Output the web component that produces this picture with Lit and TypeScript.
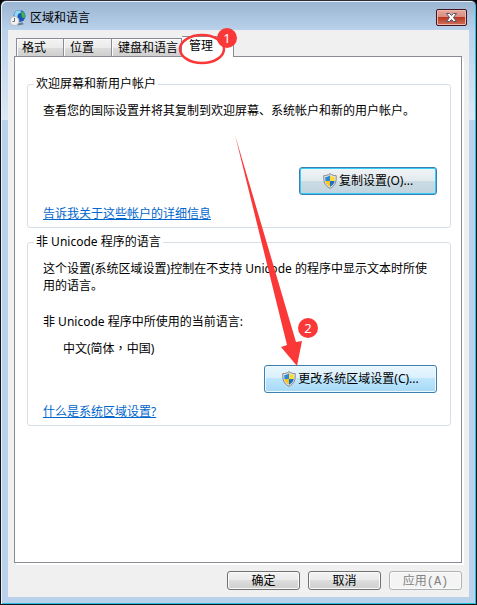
import { LitElement, html, css } from "lit";
import { customElement } from "lit/decorators.js";

const shield = html`<svg class="shield" width="14" height="16" viewBox="0 0 14 16" aria-hidden="true">
  <path d="M7 .6 C5.500 2 3 2.600 .8 2.600 C.4 8.500 1.600 12.600 7 15.400 C12.400 12.600 13.600 8.500 13.200 2.600 C11 2.600 8.500 2 7 .6 Z" fill="#dfe1e2" stroke="#85898d" stroke-width="1"/>
  <path d="M7 2.300 C5.800 3.400 4 4 2.300 4.100 L2.300 8 L7 8 Z" fill="#2a8ad8"/>
  <path d="M7 2.300 C8.200 3.400 10 4 11.700 4.100 L11.700 8 L7 8 Z" fill="#ffdc35"/>
  <path d="M2.300 8 L7 8 L7 13.800 C4.200 12.300 2.700 10.500 2.300 8 Z" fill="#f9c51c"/>
  <path d="M11.700 8 L7 8 L7 13.800 C9.800 12.300 11.300 10.500 11.700 8 Z" fill="#1b6fc2"/>
</svg>`;

@customElement("app-root")
export class AppRoot extends LitElement {
  static styles = css`
    :host {
      display: block;
      font: 12px/16px "Noto Sans", "Noto Sans CJK SC", sans-serif;
      color: #000;
      background: #000;
    }
    * { box-sizing: border-box; }
    .window {
      min-height: 100vh;
      display: flex;
      flex-direction: column;
      border: 1px solid #15171c;
      border-top: 1px solid #2b2a33;
      border-radius: 6px 6px 0 0;
      padding: 0 7px 7px;
      background:
        linear-gradient(#99b4d1, #b9d1ea 29px, #dce8f5 119px, #b9d1ea 119px);
      box-shadow: inset 1px 1px 0 #e8f1fa, inset -1px -1px 0 #27bfe2;
    }
    .title {
      display: flex;
      align-items: center;
      height: 29px;
      padding: 4px 2px 0 1px;
      gap: 3px;
    }
    h1 { flex: 1; margin: 0; font: inherit; }
    .close {
      width: 31px;
      height: 17px;
      display: grid;
      place-items: center;
      padding: 0;
      border: 1px solid #431422;
      border-radius: 2px;
      background: linear-gradient(#e5a99d, #d98b7d 50%, #b93822 50%, #d0705a);
      box-shadow: inset 0 0 0 1px #ecb9ae;
    }
    .client {
      flex: 1;
      display: flex;
      flex-direction: column;
      background: #f0f0f0;
      padding: 6px 7px 7px 6px;
    }
    .tabs {
      display: flex;
      align-items: flex-end;
      height: 20px;
      padding-left: 2px;
    }
    .tab {
      height: 18px;
      padding: 0 6px;
      border: 1px solid #898c95;
      border-bottom: 0;
      border-left-width: 0;
      background: linear-gradient(#f3f3f3, #ebebeb 50%, #dddddd 50%, #cfcfcf);
      box-shadow: inset 1px 1px 0 #fcfcfc;
      font: inherit;
      color: inherit;
      text-align: left;
      white-space: nowrap;
    }
    .tab:first-child { border-left-width: 1px; padding-left: 5px; }
    .short { width: 48px; }
    .long { width: 70px; }
    .tab.selected {
      position: relative;
      z-index: 1;
      width: 52px;
      height: 21px;
      margin-bottom: -1px;
      padding: 0 7px 3px;
      background: #fff;
      box-shadow: none;
    }
    .ring { position: absolute; left: -4px; top: -4px; }
    .badge {
      position: absolute;
      width: 20px;
      height: 20px;
      border-radius: 50%;
      background: #fb3838;
      color: #fff;
      font-size: 13px;
      line-height: 20px;
      text-align: center;
    }
    .one { left: 35px; top: -9px; }
    .pane {
      flex: 1;
      border: 1px solid #898c95;
      background: #fff;
      box-shadow: 2px 2px 0 #fff;
      padding: 19px 10px 18px 12px;
    }
    fieldset {
      margin: 0 0 6px;
      min-width: 0;
      border: 1px solid #d5dfe5;
      border-radius: 3px;
      padding: 10px 13px 5px 15px;
    }
    legend { margin-left: -9px; padding: 0 2px; }
    p { margin: 0; line-height: 17px; }
    .action {
      display: flex;
      justify-content: flex-end;
    }
    .copy { margin-top: 48px; }
    .change { margin-top: 8px; }
    .links { margin-top: 10px; }
    .about { padding-right: 8px; }
    .current { margin-top: 19px; }
    .locale { margin-top: 9px; padding-left: 20px; }
    .comma { font-family: "Noto Sans CJK TC", sans-serif; }
    a { color: #0066cc; text-decoration: underline; }
    .command {
      height: 28px;
      display: flex;
      align-items: center;
      justify-content: center;
      gap: 2px;
      padding: 0;
      border: 1px solid #3c7fb1;
      border-radius: 3px;
      font: inherit;
      color: inherit;
    }
    .copybtn {
      width: 138px;
      background: linear-gradient(#f0f4f6, #e2eaee 50%, #ccdbe3 50%, #c0d4de);
      box-shadow: inset 0 0 0 1px #35cdf5;
    }
    .anchor { position: relative; }
    .changebtn {
      width: 173px;
      background: linear-gradient(#eaf6fd, #d9f0fc 48%, #bee6fd 48%, #a7d9f5);
      box-shadow: inset 0 0 0 1px #eef9ff;
    }
    .arrow { position: absolute; left: -34px; top: -235px; pointer-events: none; }
    .two { left: 34px; top: -47px; }
    .footer {
      display: flex;
      justify-content: flex-end;
      gap: 8px;
      padding-top: 8px;
    }
    .footer button {
      width: 73px;
      height: 19px;
      padding: 0;
      border: 1px solid #707070;
      border-radius: 3px;
      background: linear-gradient(#f2f2f2, #ebebeb 50%, #dddddd 50%, #cfcfcf);
      box-shadow: inset 0 0 0 1px #fbfbfb;
      font: inherit;
      line-height: 17px;
      color: inherit;
    }
    .footer button:disabled {
      border-color: #adb2b5;
      background: #f4f4f4;
      color: #838383;
    }
    .mono { font-family: "Liberation Mono", monospace; }
  `;

  render() {
    return html`
      <main class="window">
        <header class="title">
          <svg width="18" height="18" viewBox="0 0 18 18" aria-hidden="true">
            <circle cx="10.500" cy="7" r="6" fill="#1c55b8"/>
            <path d="M5 6 C6 2 9 .8 12 1.500 L11.500 4 L9 5 L8.500 8 L6 8 Z" fill="#8fdcf2"/>
            <path d="M12 2.500 L14.500 3 L16.300 6 L15.500 9.500 L13 8.500 L12.500 6 Z" fill="#3db449"/>
            <path d="M8 14 L14 13.500 L14.500 15.500 L9 16.500 Z" fill="#6f7f95"/>
            <circle cx="5.500" cy="12" r="4.500" fill="#f1f2f3" stroke="#b4babf"/>
            <path d="M5.500 9 V12.500 H3.500" fill="none" stroke="#66707a"/>
          </svg>
          <h1>区域和语言</h1>
          <button class="close" aria-label="关闭">
            <svg width="13" height="11" viewBox="0 0 13 11">
              <path d="M1.500 1.500 H4.500 L6.500 3.500 L8.500 1.500 H11.500 L8.500 5.500 L11.500 9.500 H8.500 L6.500 7.500 L4.500 9.500 H1.500 L4.500 5.500 Z" fill="#fff" stroke="#535666"/>
            </svg>
          </button>
        </header>
        <section class="client">
          <div class="tabs" role="tablist">
            <button class="tab short" role="tab">格式</button>
            <button class="tab short" role="tab">位置</button>
            <button class="tab long" role="tab">键盘和语言</button>
            <button class="tab selected" role="tab" aria-selected="true">管理
              <svg class="ring" width="48" height="32" viewBox="0 0 48 32" aria-hidden="true">
                <ellipse cx="24" cy="16" rx="22" ry="14" fill="none" stroke="#fb3838" stroke-width="2.500"/>
              </svg>
              <span class="badge one">1</span>
            </button>
          </div>
          <div class="pane" role="tabpanel">
            <fieldset>
              <legend>欢迎屏幕和新用户帐户</legend>
              <p>查看您的国际设置并将其复制到欢迎屏幕、系统帐户和新的用户帐户。</p>
              <div class="action copy">
                <button class="command copybtn">${shield}复制设置(O)...</button>
              </div>
              <p class="links"><a href="#accounts">告诉我关于这些帐户的详细信息</a></p>
            </fieldset>
            <fieldset>
              <legend>非 Unicode 程序的语言</legend>
              <p class="about">这个设置(系统区域设置)控制在不支持 Unicode 的程序中显示文本时所使用的语言。</p>
              <p class="current">非 Unicode 程序中所使用的当前语言:</p>
              <p class="locale">中文(简体<span class="comma">，</span>中国)</p>
              <div class="action change">
                <div class="anchor">
                  <button class="command changebtn">${shield}更改系统区域设置(C)...</button>
                  <svg class="arrow" width="80" height="240" viewBox="0 0 80 240" aria-hidden="true">
                    <path d="M5 5 L66 212 L72 211 L67 236 L51 217 L57 215 Z" fill="#fb3838"/>
                  </svg>
                  <span class="badge two">2</span>
                </div>
              </div>
              <p class="links"><a href="#locale">什么是系统区域设置?</a></p>
            </fieldset>
          </div>
          <footer class="footer">
            <button>确定</button>
            <button>取消</button>
            <button disabled>应用<span class="mono">(A)</span></button>
          </footer>
        </section>
      </main>
    `;
  }
}
